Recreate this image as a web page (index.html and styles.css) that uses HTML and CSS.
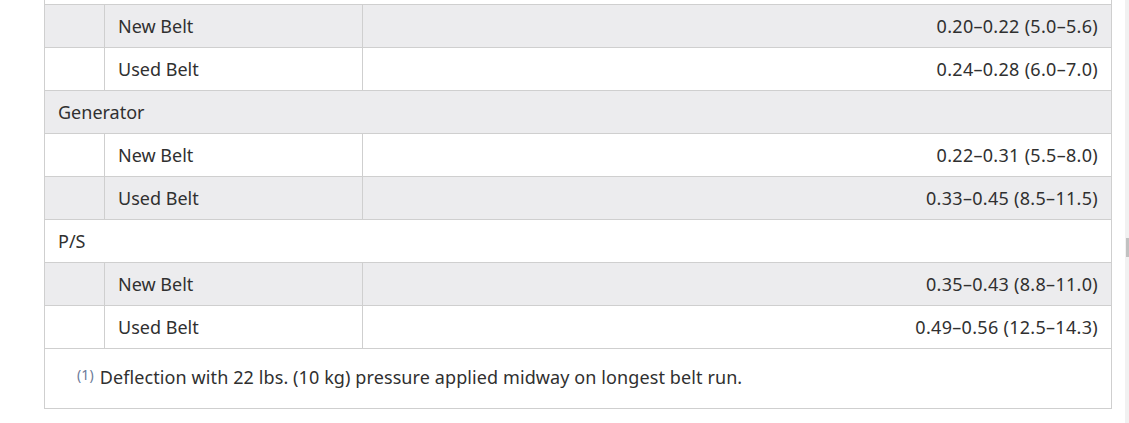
FILE: index.html
```html
<!DOCTYPE html>
<html lang="en">
<head>
<meta charset="utf-8">
<title>Belt Deflection</title>
<link rel="stylesheet" href="styles.css">
</head>
<body>
<div class="page">
  <table class="spec">
    <colgroup>
      <col class="c1"><col class="c2"><col class="c3">
    </colgroup>
    <tbody>
      <tr class="group white"><td colspan="3"></td></tr>
      <tr class="grey"><td></td><td>New Belt</td><td class="val">0.20–0.22 (5.0–5.6)</td></tr>
      <tr class="white"><td></td><td>Used Belt</td><td class="val">0.24–0.28 (6.0–7.0)</td></tr>
      <tr class="group grey"><td colspan="3">Generator</td></tr>
      <tr class="white"><td></td><td>New Belt</td><td class="val">0.22–0.31 (5.5–8.0)</td></tr>
      <tr class="grey"><td></td><td>Used Belt</td><td class="val">0.33–0.45 (8.5–11.5)</td></tr>
      <tr class="group white"><td colspan="3">P/S</td></tr>
      <tr class="grey"><td></td><td>New Belt</td><td class="val">0.35–0.43 (8.8–11.0)</td></tr>
      <tr class="white"><td></td><td>Used Belt</td><td class="val">0.49–0.56 (12.5–14.3)</td></tr>
      <tr class="foot"><td colspan="3"><sup class="note">(1)</sup>Deflection with 22 lbs. (10 kg) pressure applied midway on longest belt run.</td></tr>
    </tbody>
  </table>
</div>
<div class="scrolltrack"><div class="thumb"></div></div>
</body>
</html>
```
FILE: styles.css
```css
html, body {
  margin: 0;
  padding: 0;
  background: #ffffff;
}
body {
  font-family: "Noto Sans", "Open Sans", sans-serif;
  color: #303030;
  overflow: hidden;
  height: 423px;
}
.page {
  padding-left: 44px;
  width: 1068px;
  margin-top: -39px;
}
.spec {
  width: 1068px;
  border-collapse: collapse;
  font-size: 18px;
}
.c1 { width: 60px; }
.c2 { width: 258px; }
.spec td {
  border: 1px solid #cfcfcf;
  height: 43px;
  padding: 0 13px;
  box-sizing: border-box;
  vertical-align: middle;
  line-height: 20px;
}
.spec tr.grey td { background: #ececee; }
.spec tr.white td { background: #ffffff; }
.spec td.val { text-align: right; letter-spacing: 0.3px; }
.spec tr.foot td {
  height: 60px;
  padding: 0 32px 5px;
  letter-spacing: 0.1px;
}
.note {
  font-size: 14px;
  color: #6b7a99;
  vertical-align: 4px;
  margin-right: 6px;
}
.scrolltrack {
  position: fixed;
  top: 0;
  right: 0;
  width: 4px;
  height: 423px;
  background: #f1f1f1;
}
.thumb {
  margin-top: 238px;
  margin-left: 1px;
  width: 3px;
  height: 19px;
  background: #c1c1c1;
}
```
